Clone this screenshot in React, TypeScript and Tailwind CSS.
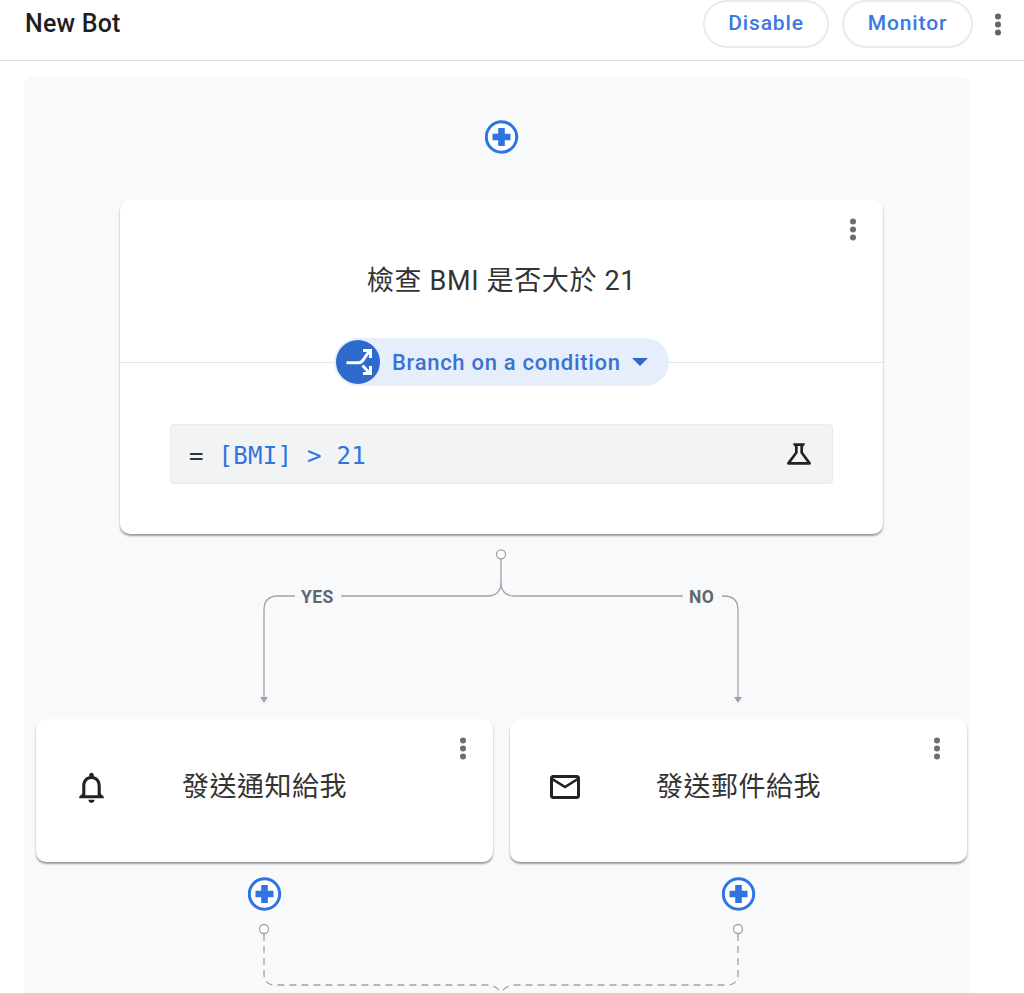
import React from "react";

const Kebab = ({ className }: { className: string }) => (
  <svg viewBox="0 0 8 24" className={className} fill="currentColor">
    <circle cx="4" cy="4" r="3" />
    <circle cx="4" cy="12" r="3" />
    <circle cx="4" cy="20" r="3" />
  </svg>
);

const PlusButton = () => (
  <svg viewBox="0.5 0 34 34" className="w-[34px] h-[34px] block" fill="none">
    <circle cx="17" cy="17" r="15.2" stroke="#2f74e0" strokeWidth="3" fill="#fff" />
    <path d="M13.7 8h6.6v5.7H26v6.6h-5.7V26h-6.6v-5.7H8v-6.6h5.7z" fill="#2f74e0" />
  </svg>
);

const BranchIcon = () => (
  <svg viewBox="0 0 44 44" className="w-[44px] h-[44px] block" fill="none">
    <circle cx="22" cy="22" r="22" fill="#2e69cc" />
    <path d="M10.5 22.7h12c2 0 3-.6 4.2-2.2L33 11.5" stroke="#fff" strokeWidth="3" />
    <path d="M26.5 25.5l6.5 7" stroke="#fff" strokeWidth="3" />
    <path d="M27 10.5h7.5V18M34.5 26v7.5H27" stroke="#fff" strokeWidth="3" />
  </svg>
);

const StepCard = ({ icon, title }: { icon: React.ReactNode; title: string }) => (
  <div className="relative h-[143px] w-full rounded-[10px] bg-white shadow-[0_2px_2px_rgba(60,64,67,0.5)] flex items-start">
    <Kebab className="absolute right-[26px] top-[17px] w-[8px] h-[25px] text-[#6a6d72]" />
    <div className="w-[110px] h-[136px] flex items-center justify-center">{icon}</div>
    <div className="w-[237px] h-[137px] flex items-center justify-center text-[27px] text-[#333] tracking-[0.5px]">
      {title}
    </div>
  </div>
);

export default function App() {
  return (
    <div className="h-[993px] w-[1024px] overflow-hidden bg-white font-['Roboto','Noto_Sans_CJK_TC',sans-serif]">
      <header className="h-[61px] border-b border-[#dfe0e2] flex items-start justify-between pl-[25px] pr-[22px]">
        <h1 className="mt-[8px] text-[25px] leading-[32px] font-medium tracking-[0.2px] text-[#1f1f1f]">New Bot</h1>
        <div className="flex items-start">
          <button className="w-[126px] h-[48px] rounded-full border-2 border-[#e8eaed] text-[21px] font-medium tracking-[0.85px] text-[#3b78e0]">
            Disable
          </button>
          <button className="ml-[13px] w-[131px] h-[48px] rounded-full border-2 border-[#e8eaed] text-[21px] font-medium tracking-[0.85px] text-[#3b78e0]">
            Monitor
          </button>
          <Kebab className="ml-[21px] mt-[12px] w-[8px] h-[25px] text-[#5f6368]" />
        </div>
      </header>

      <main className="mt-[16px] ml-[24px] w-[946px] h-[916px] rounded-t-[8px] bg-[#f8f9fb] pl-[12px] pt-[43px]">
        <div className="w-[931px]">
          <div className="flex justify-center">
            <PlusButton />
          </div>

          <section className="relative mt-[46px] mx-auto w-[763px] h-[334px] rounded-[10px] bg-white shadow-[0_2px_2px_rgba(60,64,67,0.5)] flex flex-col">
            <Kebab className="absolute right-[26px] top-[17px] w-[8px] h-[25px] text-[#6a6d72]" />
            <h2 className="mt-[63px] text-center text-[27px] leading-[36px] tracking-[0.65px] font-normal text-[#333]">
              檢查 BMI 是否大於 21
            </h2>
            <div className="mt-[39px] flex items-center">
              <div className="flex-1 h-px bg-[#e3e4e6]" />
              <div className="w-[335px] h-[48px] rounded-full bg-[#e6eefc] flex items-center pl-[2px]">
                <BranchIcon />
                <span className="ml-[12px] text-[22px] font-medium tracking-[0.7px] text-[#3a72d4]">
                  Branch on a condition
                </span>
                <svg viewBox="0 0 16 8" className="ml-[11px] w-[16px] h-[8px]" fill="#3069cc">
                  <path d="M0 0h16L8 8z" />
                </svg>
              </div>
              <div className="flex-1 h-px bg-[#e3e4e6]" />
            </div>
            <div className="mt-[38px] mx-[50px] h-[60px] rounded-[4px] bg-[#f1f3f4] border border-[#e8eaed] flex items-center justify-between pl-[18px] pr-[17px]">
              <code className="mt-[3px] font-['DejaVu_Sans_Mono',monospace] text-[24px] tracking-[0.3px] text-[#2f74e0]">
                <span className="text-[#333]">=</span> [BMI] &gt; 21
              </code>
              <svg viewBox="0 0 24 24" className="w-[32px] h-[32px]" fill="#222">
                <path d="M13,11.33L18,18H6l5-6.67V6h2 M15.96,4H8.04C7.62,4,7.39,4.48,7.65,4.81L9,6.5v4.17L3.2,18.4C2.71,19.06,3.18,20,4,20h16c0.82,0,1.29-0.94,0.8-1.6L15,10.67V6.5l1.35-1.69C16.61,4.48,16.38,4,15.96,4L15.96,4z" fillRule="evenodd" />
              </svg>
            </div>
          </section>

          {/* branch connector */}
          <div className="relative h-[185px]">
            <svg viewBox="36 534 931 185" className="w-[931px] h-[185px] block" fill="none" stroke="#a0a3a7" strokeWidth="1.3">
              <circle cx="501" cy="554.3" r="4.5" fill="#fff" />
              <path d="M501 559v24c0 8-5 13-13 13H341" />
              <path d="M295 596h-17c-9 0-14 5-14 14v87" />
              <path d="M501 583c0 8 5 13 13 13h169" />
              <path d="M722 596h2c9 0 14 5 14 14v87" />
              <path d="M260 697h8l-4 6zM734 697h8l-4 6z" fill="#a0a3a7" stroke="none" />
            </svg>
            <span className="absolute left-[265px] top-[53px] text-[17.5px] leading-[20px] tracking-[0.4px] font-bold text-[#63666b]">YES</span>
            <span className="absolute left-[653px] top-[53px] text-[17.5px] leading-[20px] tracking-[0.4px] font-bold text-[#63666b]">NO</span>
          </div>

          <div className="grid grid-cols-[457px_457px] gap-x-[17px]">
            <div className="flex flex-col items-center gap-[15px]">
              <StepCard
                title="發送通知給我"
                icon={
                  <svg viewBox="0 0 24 24" className="w-[37px] h-[37px]" fill="#222">
                    <path d="M12 22c1.1 0 2-.9 2-2h-4c0 1.1.9 2 2 2zm6-6v-5c0-3.07-1.63-5.64-4.5-6.32V4c0-.83-.67-1.5-1.5-1.5s-1.5.67-1.5 1.5v.68C7.64 5.36 6 7.92 6 11v5l-2 2v1h16v-1l-2-2zm-2 1H8v-6c0-2.48 1.51-4.5 4-4.5s4 2.02 4 4.5v6z" />
                  </svg>
                }
              />
              <PlusButton />
            </div>
            <div className="flex flex-col items-center gap-[15px]">
              <StepCard
                title="發送郵件給我"
                icon={
                  <svg viewBox="0 0 24 24" className="w-[36px] h-[36px]" fill="#222">
                    <path d="M20 4H4c-1.1 0-1.99.9-1.99 2L2 18c0 1.1.9 2 2 2h16c1.1 0 2-.9 2-2V6c0-1.1-.9-2-2-2zm0 14H4V8l8 5 8-5v10zm-8-7L4 6h16l-8 5z" />
                  </svg>
                }
              />
              <PlusButton />
            </div>
          </div>

          {/* dashed merge connector */}
          <svg viewBox="36 920 931 73" className="mt-[9px] w-[931px] h-[73px] block" fill="none" stroke="#a0a3a7" strokeWidth="1.3">
            <circle cx="264" cy="929" r="4.5" fill="#fff" />
            <circle cx="738" cy="929" r="4.5" fill="#fff" />
            <path d="M264 934v40c0 7 4 11 11 11h212c7 0 11 3 14 8" strokeDasharray="7 5" />
            <path d="M738 934v40c0 7-4 11-11 11H515c-7 0-11 3-14 8" strokeDasharray="7 5" />
          </svg>
        </div>
      </main>
    </div>
  );
}
